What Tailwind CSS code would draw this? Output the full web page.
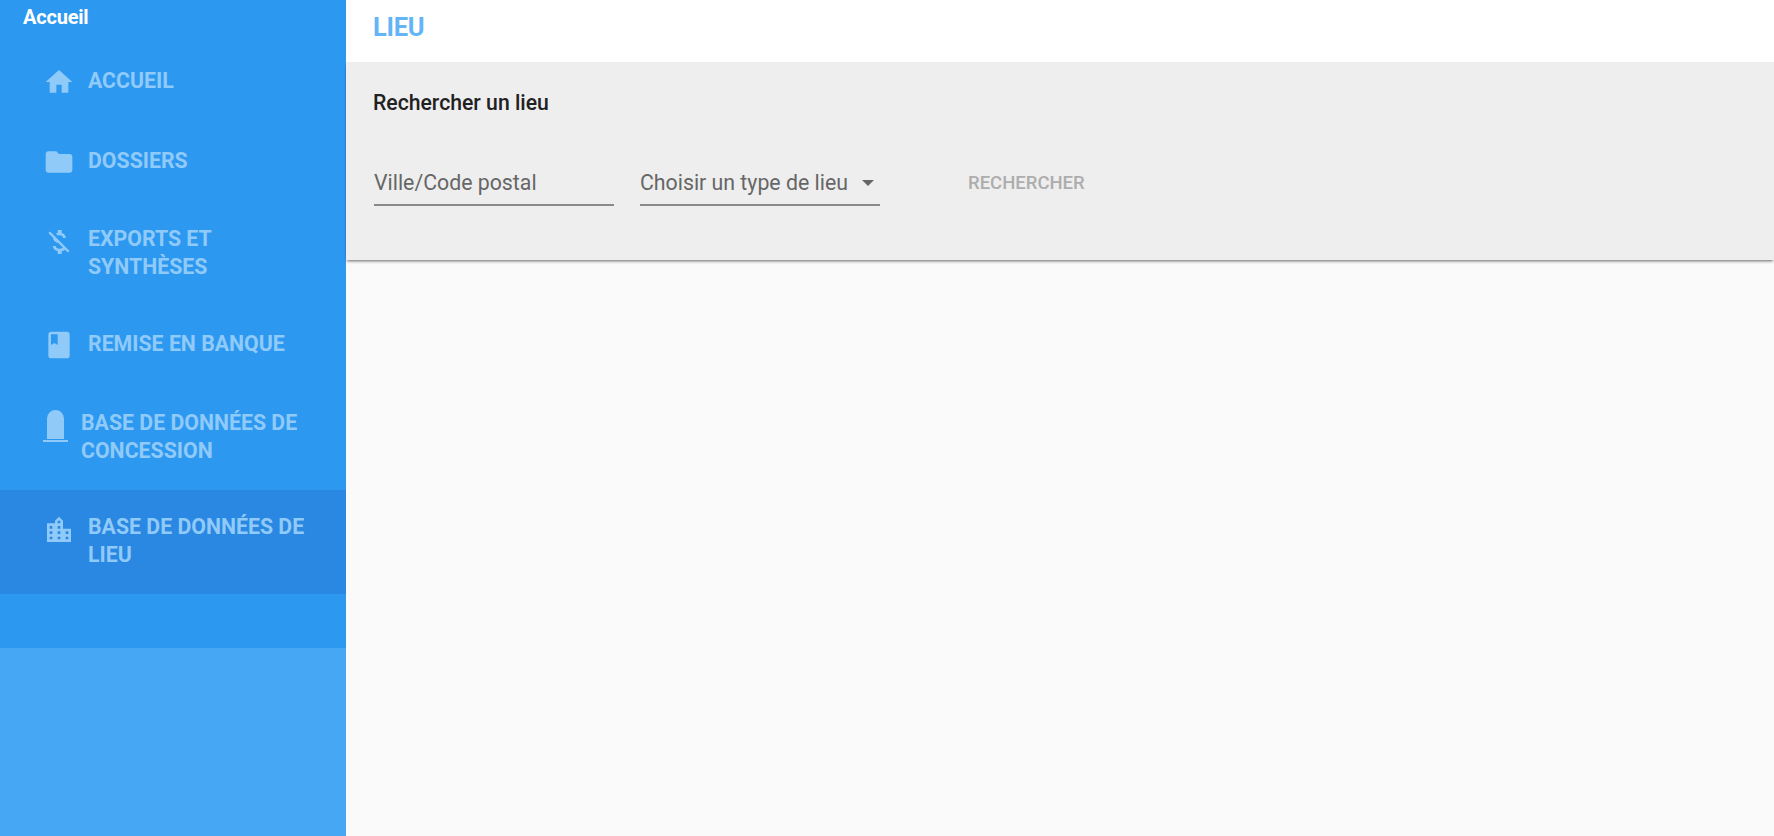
<!DOCTYPE html>
<html lang="fr">

<head>
    <meta charset="UTF-8" />
    <title>Lieu</title>
    <script src="https://cdn.jsdelivr.net/npm/@tailwindcss/browser@4"></script>
</head>

<body class="font-['Roboto',sans-serif] bg-[#fafafa] overflow-hidden">
    <div class="flex h-[836px]">

        <!-- Sidebar -->
        <aside class="w-[346px] shrink-0 flex flex-col bg-[#46a7f5]">
            <div class="bg-[#2d98f0] pb-[54px]">
                <div class="h-[42px] pl-[23px] pt-[5px] text-[20px] leading-[24px] font-bold text-white tracking-[-0.2px]">Accueil</div>
                <nav class="text-[21.3px] leading-[28px] font-bold text-[#90caf9]">
                    <a class="flex pl-[43px] pr-4 pt-6 h-[76px]">
                        <svg class="w-[32px] h-[32px] shrink-0 mr-[13px] fill-[#90caf9]" viewBox="0 0 24 24"><path d="M10 20v-6h4v6h5v-8h3L12 3 2 12h3v8z" /></svg>
                        <span class="mt-px">ACCUEIL</span>
                    </a>
                    <a class="flex pl-[43px] pr-4 pt-[28px] h-[80px]">
                        <svg class="w-[32px] h-[32px] shrink-0 mr-[13px] fill-[#90caf9]" viewBox="0 0 24 24"><path d="M10 4H4c-1.1 0-1.99.9-1.99 2L2 18c0 1.1.9 2 2 2h16c1.1 0 2-.9 2-2V8c0-1.1-.9-2-2-2h-8l-2-2z" /></svg>
                        <span class="mt-px">DOSSIERS</span>
                    </a>
                    <a class="flex pl-[43px] pr-4 pt-[27px] h-[108px]">
                        <svg class="w-[32px] h-[32px] shrink-0 mr-[13px] mt-px fill-[#90caf9]" viewBox="0 0 24 24"><path d="M12.5 6.9c1.78 0 2.44.85 2.5 2.1h2.21c-.07-1.72-1.12-3.3-3.21-3.81V3h-3v2.16c-.53.12-1.03.3-1.48.54l1.47 1.47c.41-.17.91-.27 1.51-.27zM5.33 4.06L4.06 5.33 7.5 8.77c0 2.08 1.56 3.21 3.91 3.91l3.51 3.51c-.34.48-1.05.91-2.42.91-2.06 0-2.87-.92-2.98-2.1h-2.2c.12 2.19 1.76 3.42 3.68 3.83V21h3v-2.15c.96-.18 1.82-.55 2.45-1.12l2.22 2.22 1.27-1.27L5.33 4.06z" /></svg>
                        <span>EXPORTS ET<br />SYNTHÈSES</span>
                    </a>
                    <a class="flex pl-[43px] pr-4 pt-6 h-[76px]">
                        <svg class="w-[32px] h-[32px] shrink-0 mr-[13px] -mt-px fill-[#90caf9]" viewBox="0 0 24 24"><path d="M18 2H6c-1.1 0-2 .9-2 2v16c0 1.1.9 2 2 2h12c1.1 0 2-.9 2-2V4c0-1.1-.9-2-2-2zM6 4h5v8l-2.5-1.5L6 12V4z" /></svg>
                        <span>REMISE EN BANQUE</span>
                    </a>
                    <a class="flex pl-[43px] pr-4 pt-[27px] h-[108px]">
                        <svg class="w-[25px] h-[32px] shrink-0 mr-[13px] mt-px fill-[#90caf9]" viewBox="0 0 25 32"><path d="M4 29V8.500a8.500 8.500 0 0 1 17 0V29z" /><rect x="0" y="30" width="25" height="2" /></svg>
                        <span>BASE DE DONNÉES DE<br />CONCESSION</span>
                    </a>
                    <a class="flex pl-[43px] pr-4 pt-6 h-[104px] bg-[#2a87e2]">
                        <svg class="w-[32px] h-[32px] shrink-0 mr-[13px] fill-[#90caf9]" viewBox="0 0 24 24"><path d="M15 11V5l-3-3-3 3v2H3v14h18V11h-6zm-8 8H5v-2h2v2zm0-4H5v-2h2v2zm0-4H5V9h2v2zm6 8h-2v-2h2v2zm0-4h-2v-2h2v2zm0-4h-2V9h2v2zm0-4h-2V5h2v2zm6 12h-2v-2h2v2zm0-4h-2v-2h2v2z" /></svg>
                        <span class="-mt-px">BASE DE DONNÉES DE<br />LIEU</span>
                    </a>
                </nav>
            </div>
        </aside>

        <!-- Main -->
        <main class="flex-1 flex flex-col">
            <header class="h-[62px] bg-white flex items-center pl-[27px] pb-[6px]">
                <h1 class="text-[25.5px] font-bold text-[#64b5f6] leading-none tracking-[-0.3px]">LIEU</h1>
            </header>
            <section class="h-[198px] bg-[#eeeeee] pl-[28px] pt-[28px] shadow-[0_2px_3px_-1px_rgba(0,0,0,0.6)]">
                <h2 class="-ml-px text-[21.2px] leading-[26px] font-medium text-[#212121]">Rechercher un lieu</h2>
                <div class="flex items-start mt-[38px]">
                    <div class="w-[240px] h-[52px] pt-[8px] border-b-2 border-[#8a8a8a] flex items-center text-[21.3px] text-[#666666]">Ville/Code postal</div>
                    <div class="w-[240px] h-[52px] pt-[8px] ml-[26px] border-b-2 border-[#8a8a8a] flex items-center justify-between pr-[6px] text-[21.3px] text-[#666666]">
                        <span>Choisir un type de lieu</span>
                        <span class="w-0 h-0 border-x-[6px] border-x-transparent border-t-[6px] border-t-[#666666]"></span>
                    </div>
                    <button class="ml-[88px] h-[60px] text-[18.500px] font-medium text-[#adadad]">RECHERCHER</button>
                </div>
            </section>
        </main>
    </div>
</body>

</html>
